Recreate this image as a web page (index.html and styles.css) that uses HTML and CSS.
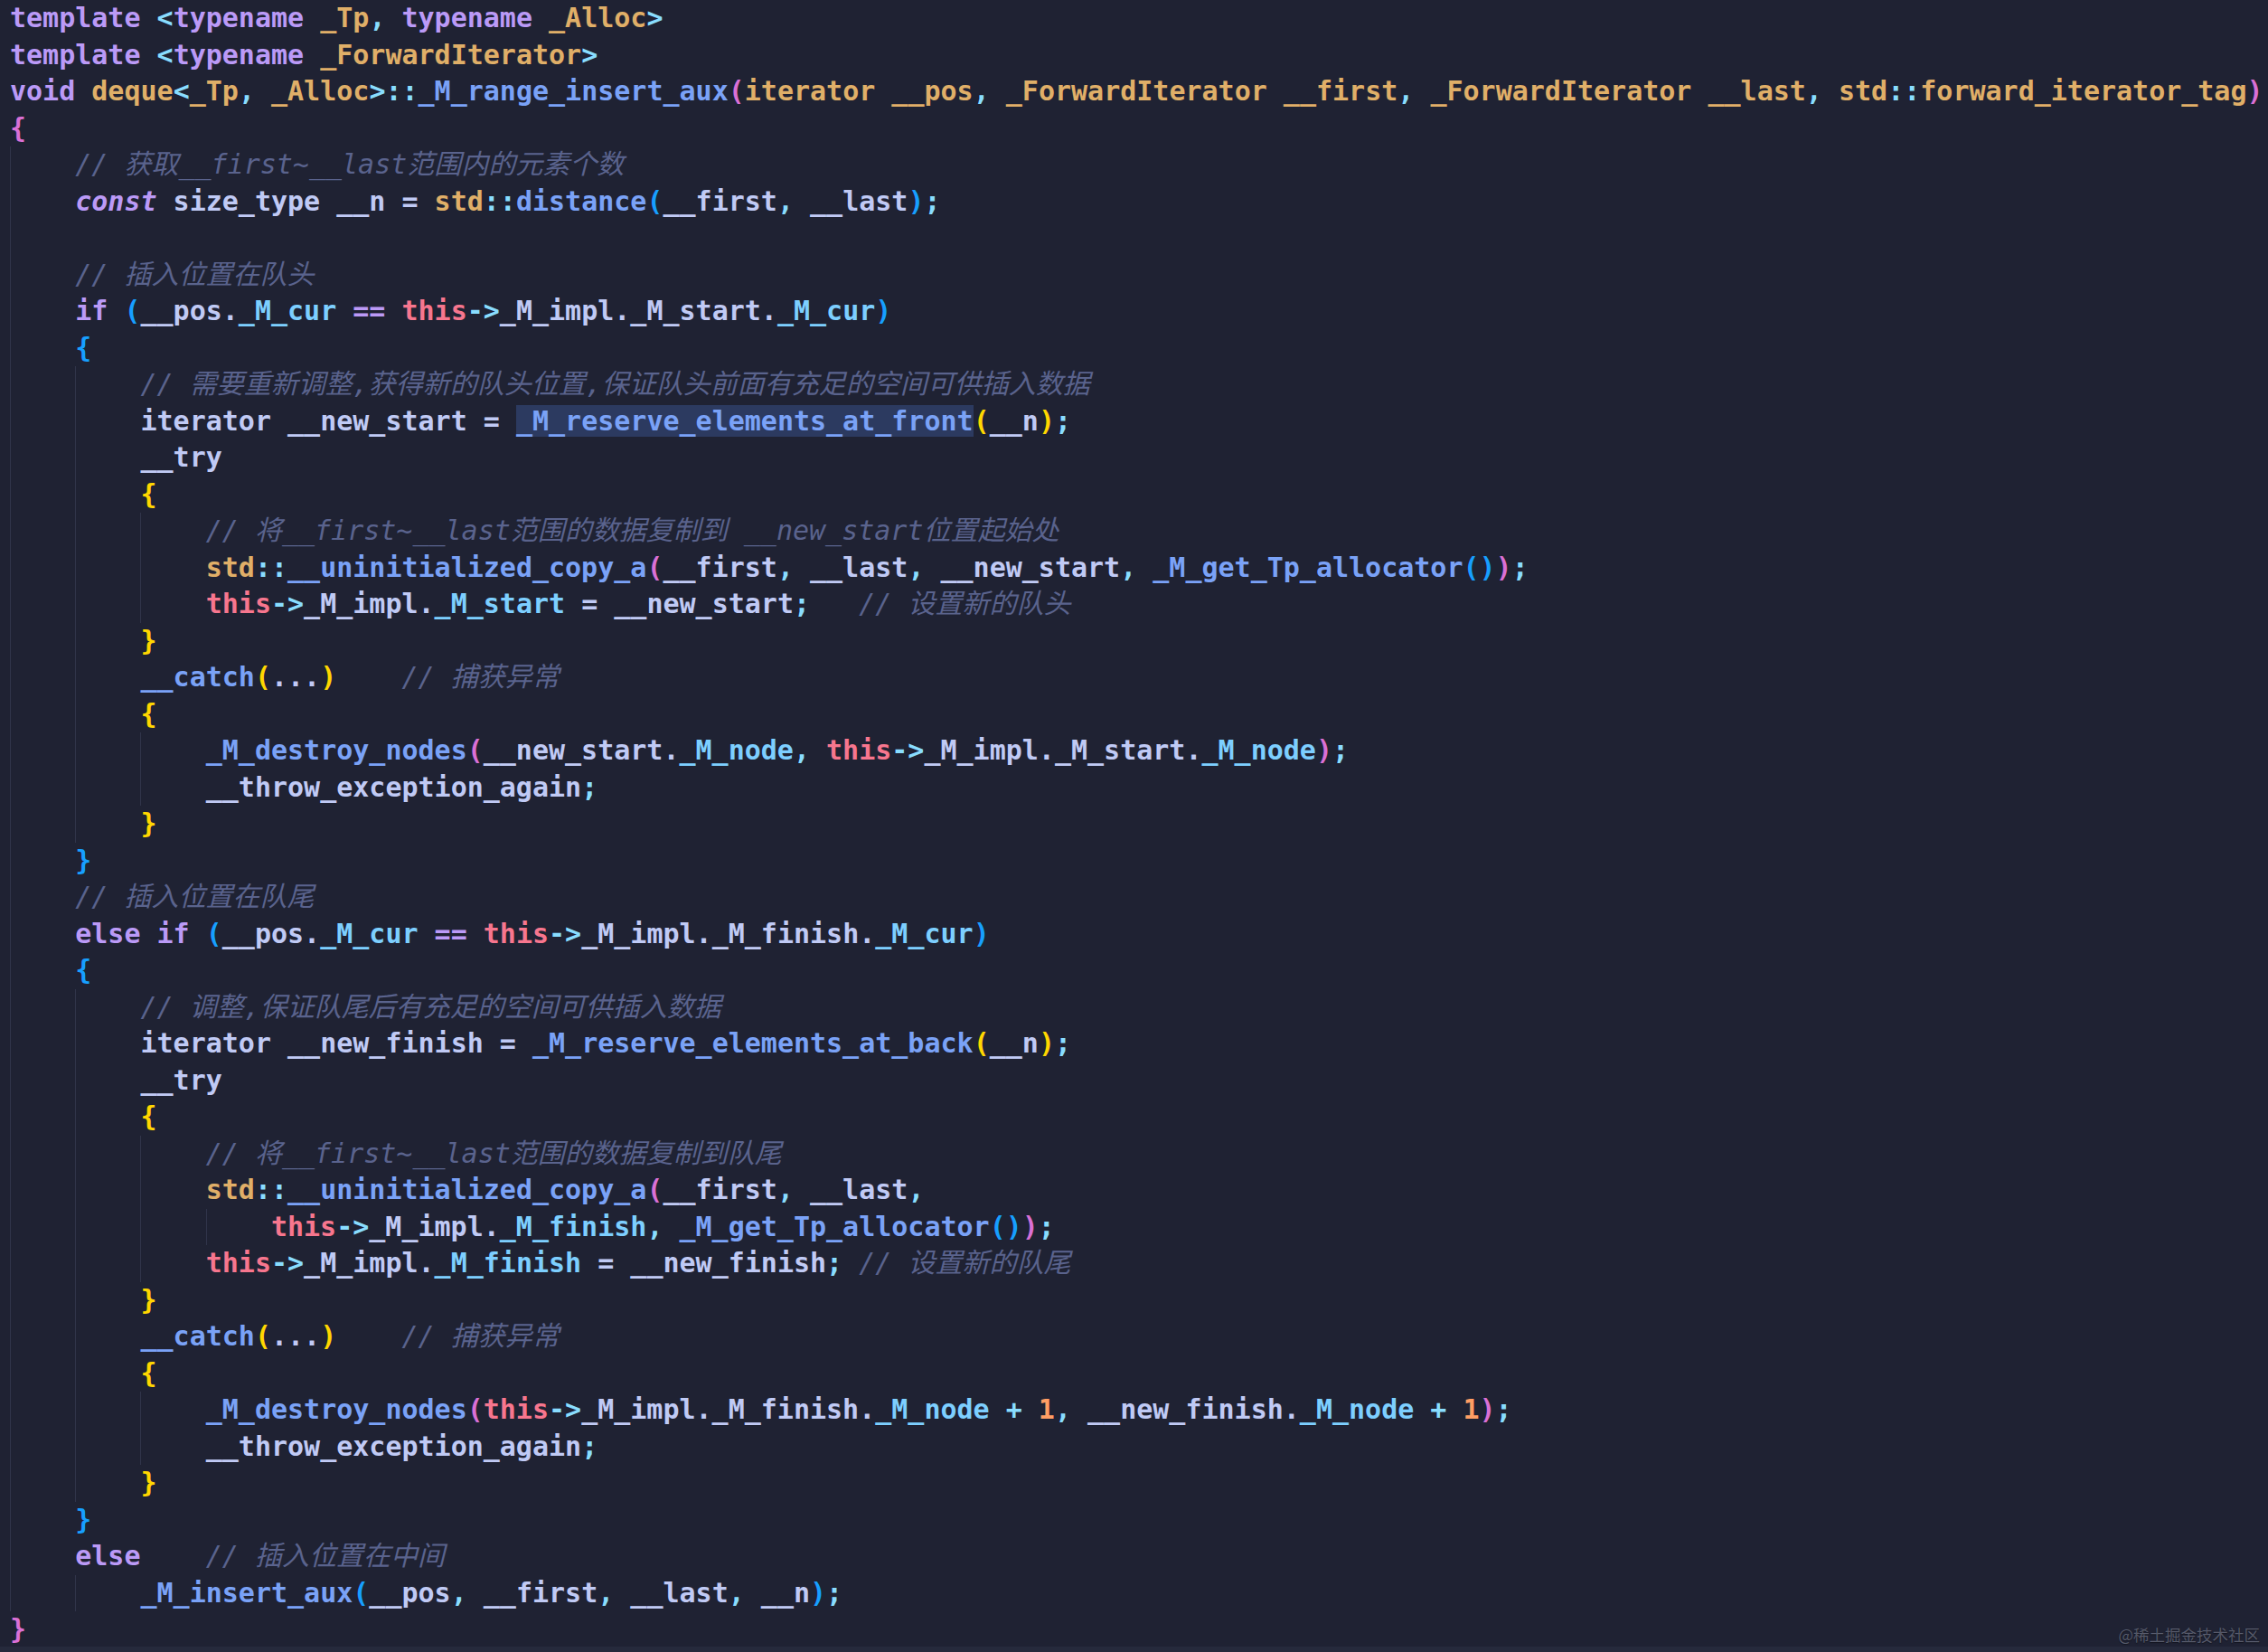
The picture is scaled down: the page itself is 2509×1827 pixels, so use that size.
FILE: index.html
```html
<!DOCTYPE html>
<html lang="zh-CN">
<head>
<meta charset="utf-8">
<title>deque _M_range_insert_aux</title>
<link rel="stylesheet" href="styles.css">
</head>
<body>
<div class="editor">
<div class="ln"><span class="x"><span class="k">template</span> <span class="o">&lt;</span><span class="k">typename</span> <span class="t">_Tp</span><span class="o">,</span> <span class="k">typename</span> <span class="t">_Alloc</span><span class="o">&gt;</span></span></div>
<div class="ln"><span class="x"><span class="k">template</span> <span class="o">&lt;</span><span class="k">typename</span> <span class="t">_ForwardIterator</span><span class="o">&gt;</span></span></div>
<div class="ln"><span class="x"><span class="k">void</span> <span class="t">deque</span><span class="o">&lt;</span><span class="t">_Tp</span><span class="o">,</span> <span class="t">_Alloc</span><span class="o">&gt;::</span><span class="f">_M_range_insert_aux</span><span class="b1">(</span><span class="t">iterator __pos</span><span class="o">,</span> <span class="t">_ForwardIterator __first</span><span class="o">,</span> <span class="t">_ForwardIterator __last</span><span class="o">,</span> <span class="t">std</span><span class="o">::</span><span class="t">forward_iterator_tag</span><span class="b1">)</span></span></div>
<div class="ln"><span class="x"><span class="b1">{</span></span></div>
<div class="ln"><span class="g"></span><span class="x"><span class="c">// 获取__first~__last范围内的元素个数</span></span></div>
<div class="ln"><span class="g"></span><span class="x"><span class="ki">const</span> size_type __n = <span class="t">std</span><span class="o">::</span><span class="f">distance</span><span class="b2">(</span>__first<span class="o">,</span> __last<span class="b2">)</span><span class="o">;</span></span></div>
<div class="ln"><span class="g"></span><span class="x"></span></div>
<div class="ln"><span class="g"></span><span class="x"><span class="c">// 插入位置在队头</span></span></div>
<div class="ln"><span class="g"></span><span class="x"><span class="k">if</span> <span class="b2">(</span>__pos.<span class="p">_M_cur</span> <span class="k">==</span> <span class="th">this</span><span class="o">-&gt;</span>_M_impl._M_start.<span class="p">_M_cur</span><span class="b2">)</span></span></div>
<div class="ln"><span class="g"></span><span class="x"><span class="b2">{</span></span></div>
<div class="ln"><span class="g"></span><span class="g"></span><span class="x"><span class="c">// 需要重新调整,获得新的队头位置,保证队头前面有充足的空间可供插入数据</span></span></div>
<div class="ln"><span class="g"></span><span class="g"></span><span class="x">iterator __new_start = <span class="f hl">_M_reserve_elements_at_front</span><span class="b3">(</span>__n<span class="b3">)</span><span class="o">;</span></span></div>
<div class="ln"><span class="g"></span><span class="g"></span><span class="x">__try</span></div>
<div class="ln"><span class="g"></span><span class="g"></span><span class="x"><span class="b3">{</span></span></div>
<div class="ln"><span class="g"></span><span class="g"></span><span class="g"></span><span class="x"><span class="c">// 将__first~__last范围的数据复制到 __new_start位置起始处</span></span></div>
<div class="ln"><span class="g"></span><span class="g"></span><span class="g"></span><span class="x"><span class="t">std</span><span class="o">::</span><span class="f">__uninitialized_copy_a</span><span class="b1">(</span>__first<span class="o">,</span> __last<span class="o">,</span> __new_start<span class="o">,</span> <span class="f">_M_get_Tp_allocator</span><span class="b2">()</span><span class="b1">)</span><span class="o">;</span></span></div>
<div class="ln"><span class="g"></span><span class="g"></span><span class="g"></span><span class="x"><span class="th">this</span><span class="o">-&gt;</span>_M_impl.<span class="p">_M_start</span> = __new_start<span class="o">;</span>   <span class="c">// 设置新的队头</span></span></div>
<div class="ln"><span class="g"></span><span class="g"></span><span class="x"><span class="b3">}</span></span></div>
<div class="ln"><span class="g"></span><span class="g"></span><span class="x"><span class="f">__catch</span><span class="b3">(</span>...<span class="b3">)</span>    <span class="c">// 捕获异常</span></span></div>
<div class="ln"><span class="g"></span><span class="g"></span><span class="x"><span class="b3">{</span></span></div>
<div class="ln"><span class="g"></span><span class="g"></span><span class="g"></span><span class="x"><span class="f">_M_destroy_nodes</span><span class="b1">(</span>__new_start.<span class="p">_M_node</span><span class="o">,</span> <span class="th">this</span><span class="o">-&gt;</span>_M_impl._M_start.<span class="p">_M_node</span><span class="b1">)</span><span class="o">;</span></span></div>
<div class="ln"><span class="g"></span><span class="g"></span><span class="g"></span><span class="x">__throw_exception_again<span class="o">;</span></span></div>
<div class="ln"><span class="g"></span><span class="g"></span><span class="x"><span class="b3">}</span></span></div>
<div class="ln"><span class="g"></span><span class="x"><span class="b2">}</span></span></div>
<div class="ln"><span class="g"></span><span class="x"><span class="c">// 插入位置在队尾</span></span></div>
<div class="ln"><span class="g"></span><span class="x"><span class="k">else if</span> <span class="b2">(</span>__pos.<span class="p">_M_cur</span> <span class="k">==</span> <span class="th">this</span><span class="o">-&gt;</span>_M_impl._M_finish.<span class="p">_M_cur</span><span class="b2">)</span></span></div>
<div class="ln"><span class="g"></span><span class="x"><span class="b2">{</span></span></div>
<div class="ln"><span class="g"></span><span class="g"></span><span class="x"><span class="c">// 调整,保证队尾后有充足的空间可供插入数据</span></span></div>
<div class="ln"><span class="g"></span><span class="g"></span><span class="x">iterator __new_finish = <span class="f">_M_reserve_elements_at_back</span><span class="b3">(</span>__n<span class="b3">)</span><span class="o">;</span></span></div>
<div class="ln"><span class="g"></span><span class="g"></span><span class="x">__try</span></div>
<div class="ln"><span class="g"></span><span class="g"></span><span class="x"><span class="b3">{</span></span></div>
<div class="ln"><span class="g"></span><span class="g"></span><span class="g"></span><span class="x"><span class="c">// 将__first~__last范围的数据复制到队尾</span></span></div>
<div class="ln"><span class="g"></span><span class="g"></span><span class="g"></span><span class="x"><span class="t">std</span><span class="o">::</span><span class="f">__uninitialized_copy_a</span><span class="b1">(</span>__first<span class="o">,</span> __last<span class="o">,</span></span></div>
<div class="ln"><span class="g"></span><span class="g"></span><span class="g"></span><span class="g"></span><span class="x"><span class="th">this</span><span class="o">-&gt;</span>_M_impl.<span class="p">_M_finish</span><span class="o">,</span> <span class="f">_M_get_Tp_allocator</span><span class="b2">()</span><span class="b1">)</span><span class="o">;</span></span></div>
<div class="ln"><span class="g"></span><span class="g"></span><span class="g"></span><span class="x"><span class="th">this</span><span class="o">-&gt;</span>_M_impl.<span class="p">_M_finish</span> = __new_finish<span class="o">;</span> <span class="c">// 设置新的队尾</span></span></div>
<div class="ln"><span class="g"></span><span class="g"></span><span class="x"><span class="b3">}</span></span></div>
<div class="ln"><span class="g"></span><span class="g"></span><span class="x"><span class="f">__catch</span><span class="b3">(</span>...<span class="b3">)</span>    <span class="c">// 捕获异常</span></span></div>
<div class="ln"><span class="g"></span><span class="g"></span><span class="x"><span class="b3">{</span></span></div>
<div class="ln"><span class="g"></span><span class="g"></span><span class="g"></span><span class="x"><span class="f">_M_destroy_nodes</span><span class="b1">(</span><span class="th">this</span><span class="o">-&gt;</span>_M_impl._M_finish.<span class="p">_M_node</span> <span class="o">+</span> <span class="n">1</span><span class="o">,</span> __new_finish.<span class="p">_M_node</span> <span class="o">+</span> <span class="n">1</span><span class="b1">)</span><span class="o">;</span></span></div>
<div class="ln"><span class="g"></span><span class="g"></span><span class="g"></span><span class="x">__throw_exception_again<span class="o">;</span></span></div>
<div class="ln"><span class="g"></span><span class="g"></span><span class="x"><span class="b3">}</span></span></div>
<div class="ln"><span class="g"></span><span class="x"><span class="b2">}</span></span></div>
<div class="ln"><span class="g"></span><span class="x"><span class="k">else</span>    <span class="c">// 插入位置在中间</span></span></div>
<div class="ln"><span class="g"></span><span class="g"></span><span class="x"><span class="f">_M_insert_aux</span><span class="b2">(</span>__pos<span class="o">,</span> __first<span class="o">,</span> __last<span class="o">,</span> __n<span class="b2">)</span><span class="o">;</span></span></div>
<div class="ln"><span class="x"><span class="b1">}</span></span></div>
</div>
<div class="strip"></div>
<div class="watermark">@稀土掘金技术社区</div>
</body>
</html>
```

FILE: styles.css
```css
html, body {
  margin: 0;
  padding: 0;
}
body {
  width: 2509px;
  height: 1827px;
  overflow: hidden;
  background: #1f2233;
  display: flex;
  flex-direction: column;
  position: relative;
}
.editor {
  flex: 1;
  min-height: 0;
  padding-left: 11px;
  font-family: "DejaVu Sans Mono", "Noto Sans CJK SC", monospace;
  font-size: 30px;
  font-weight: bold;
  color: #c0caf5;
}
.ln {
  display: flex;
  height: 40.5px;
  white-space: pre;
}
.g {
  flex: none;
  width: 4ch;
  box-shadow: inset 1px 0 0 #30344a;
}
.x {
  line-height: 40.5px;
  white-space: pre;
}
.k { color: #bb9af7; }
.ki { color: #bb9af7; font-style: italic; }
.t { color: #e0af68; }
.f { color: #7aa2f7; }
.p { color: #7dcfff; }
.o { color: #89ddff; }
.th { color: #f7768e; }
.n { color: #ff9e64; }
.c {
  color: #5a638d;
  font-style: italic;
  font-weight: normal;
}
.b1 { color: #da70d6; }
.b2 { color: #179fff; }
.b3 { color: #ffd700; }
.hl { background: #2c3a60; }
.strip {
  flex: none;
  height: 6px;
  background: #262a3c;
}
.watermark {
  position: absolute;
  right: 9px;
  bottom: 9px;
  font-family: "Noto Sans CJK SC", sans-serif;
  font-size: 17.5px;
  line-height: 20px;
  color: rgba(190, 195, 215, 0.38);
  text-shadow: 0 1px 1px rgba(0, 0, 0, 0.4);
}
```
